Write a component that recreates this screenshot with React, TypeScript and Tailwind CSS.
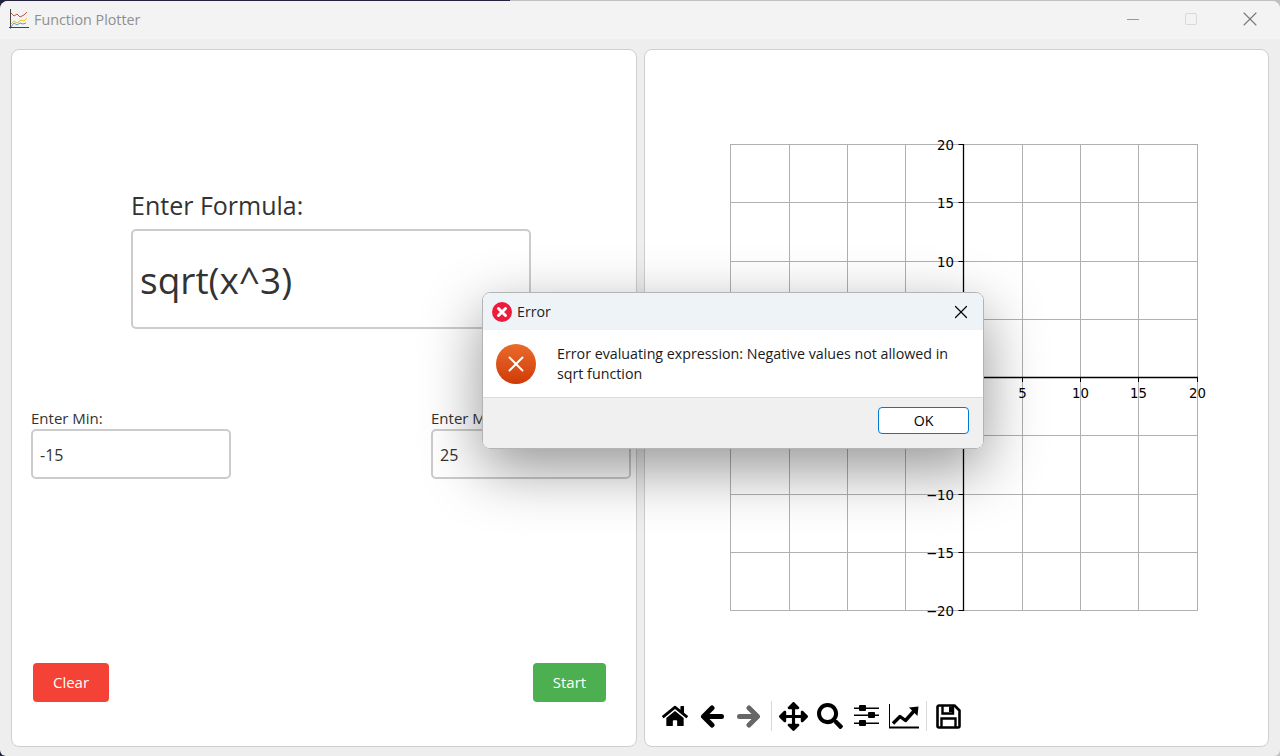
import { FaArrowsAlt, FaHome, FaSearch } from 'react-icons/fa';
import { X } from 'lucide-react';

const FONT = "font-['Open_Sans','Noto_Sans',sans-serif]";

const gridX = [730.5, 789.5, 847.5, 905.5, 963.5, 1022.5, 1080.5, 1138.5, 1197.5];
const gridY = [144.5, 202.5, 261.5, 319.5, 377.5, 435.5, 494.5, 552.5, 610.5];
const ticks = [-20, -15, -10, -5, 0, 5, 10, 15, 20];

function label(n: number) {
    return n < 0 ? `\u2212${-n}` : String(n);
}

function AppIcon() {
    return (
        <svg width="20" height="20" viewBox="0 0 20 20" fill="none" className="shrink-0">
            <path d="M1.5 0v19.5M0 18.5h20" stroke="#444" strokeWidth="1" />
            <path d="M2 4l3 3 3-2 3 3 4-2 3-3" stroke="#c0553f" strokeWidth="1" />
            <path d="M2 15l3-3 3 2 4-3 3 1 3-3" stroke="#e8c23a" strokeWidth="1" />
            <path d="M2 18l3-4 3 2 3-2 3 1 3-1" stroke="#5a9bd8" strokeWidth="1" />
        </svg>
    );
}

function Plot() {
    return (
        <svg width="520" height="500" viewBox="700 130 520 500" className="block">
            {gridX.map((x) => (
                <line key={x} x1={x} x2={x} y1={144} y2={611} stroke="#b0b0b0" strokeWidth="1" />
            ))}
            {gridY.map((y) => (
                <line key={y} x1={730} x2={1198} y1={y} y2={y} stroke="#b0b0b0" strokeWidth="1" />
            ))}
            <line x1={963.5} x2={963.5} y1={144} y2={611} stroke="#000" strokeWidth="1.3" />
            <line x1={730} x2={1198} y1={377.5} y2={377.5} stroke="#000" strokeWidth="1.3" />
            {ticks.map((t, i) => (
                <g key={t} fontFamily="'DejaVu Sans', sans-serif" fontSize="13.3" fill="#000">
                    <line x1={gridX[i]} x2={gridX[i]} y1={377} y2={382} stroke="#000" strokeWidth="1" />
                    <line x1={958.5} x2={963.5} y1={gridY[8 - i]} y2={gridY[8 - i]} stroke="#000" strokeWidth="1" />
                    {/* labels near the origin sit under the dialog */}
                    {t > 0 && <text x={gridX[i]} y={398} textAnchor="middle">{label(t)}</text>}
                    {Math.abs(t) > 5 && <text x={954} y={gridY[8 - i] + 5} textAnchor="end">{label(t)}</text>}
                </g>
            ))}
        </svg>
    );
}

function ArrowIcon({ flip, color }: { flip?: boolean; color: string }) {
    return (
        <svg width="24" height="25" viewBox="0 0 24 25" fill="none" className={flip ? '-scale-x-100' : ''}>
            <path d="M21.5 12.5H6M12 4L3.5 12.5L12 21" stroke={color} strokeWidth="5" strokeLinecap="round" strokeLinejoin="round" />
        </svg>
    );
}

function SlidersIcon() {
    return (
        <svg width="25" height="24" viewBox="0 0 25 24" fill="black">
            <rect x="0" y="3.5" width="25" height="1.5" />
            <rect x="0" y="10.5" width="25" height="1.5" />
            <rect x="0" y="18.5" width="25" height="1.5" />
            <rect x="5" y="1" width="7" height="6" rx="1" />
            <rect x="14" y="8" width="7" height="6" rx="1" />
            <rect x="5" y="16" width="7" height="6" rx="1" />
        </svg>
    );
}

function ChartIcon() {
    return (
        <svg width="30" height="25" viewBox="0 0 30 25" fill="none">
            <path d="M0.5 0V24" stroke="black" strokeWidth="1" />
            <path d="M0 23.5H30" stroke="black" strokeWidth="2" />
            <path d="M4 19.5L11 12.5L16.5 16.5L25 7" stroke="black" strokeWidth="3.4" strokeLinejoin="round" />
            <path d="M20 3.5L29.5 2.5L28.5 12Z" fill="black" />
        </svg>
    );
}

function SaveIcon() {
    return (
        <svg width="25" height="25" viewBox="0 0 25 25" fill="none">
            <path d="M3 1.5H18.5L23.5 6.5V22A1.5 1.5 0 0 1 22 23.5H3A1.5 1.5 0 0 1 1.5 22V3A1.5 1.5 0 0 1 3 1.5Z" stroke="black" strokeWidth="2.6" strokeLinejoin="round" />
            <path d="M6.5 2V9.5H17V2" stroke="black" strokeWidth="2.4" />
            <rect x="13" y="2.5" width="3" height="5.5" fill="black" />
            <path d="M5.5 23V14.5H19.5V23" stroke="black" strokeWidth="2.4" />
        </svg>
    );
}

function ToolButton({ children }: { children: React.ReactNode }) {
    return <div className="w-[37px] h-[32px] flex items-center justify-center text-black">{children}</div>;
}

function Toolbar() {
    return (
        <div className="flex items-center pl-[11px] mt-auto mb-[14px]">
            <ToolButton><FaHome size={26} /></ToolButton>
            <ToolButton><ArrowIcon color="#000" /></ToolButton>
            <ToolButton><ArrowIcon flip color="#666" /></ToolButton>
            <div className="w-px h-[30px] bg-[#d8d8d8] ml-[4px] mr-[3px]" />
            <ToolButton><FaArrowsAlt size={29} /></ToolButton>
            <div className="-ml-px"><ToolButton><FaSearch size={26} /></ToolButton></div>
            <ToolButton><SlidersIcon /></ToolButton>
            <ToolButton><ChartIcon /></ToolButton>
            <div className="w-px h-[30px] bg-[#d8d8d8] ml-[4px] mr-[3px]" />
            <ToolButton><SaveIcon /></ToolButton>
        </div>
    );
}

function ErrorDialog() {
    return (
        <div className={`${FONT} absolute left-[482px] top-[292px] w-[502px] h-[157px] rounded-lg border border-[#b4b4b4] overflow-hidden flex flex-col shadow-[0_20px_60px_rgba(0,0,0,0.42)]`}>
            <div className="h-[37px] shrink-0 bg-[#eef3f7] flex items-center pl-[9px] pr-[12px]">
                <svg width="20" height="20" viewBox="0 0 20 20" className="shrink-0">
                    <circle cx="10" cy="10" r="10" fill="#ee1c3c" />
                    <path d="M6.5 6.5l7 7M13.5 6.5l-7 7" stroke="#fff" strokeWidth="3" strokeLinecap="round" />
                </svg>
                <span className="ml-[5px] text-[14.2px] text-[#222]">Error</span>
                <X size={22} strokeWidth={1.3} className="ml-auto mr-[-1px] text-black" />
            </div>
            <div className="h-[68px] shrink-0 bg-white flex border-b border-[#dcdcdc] pl-[13px]">
                <div className="w-[40px] h-[40px] mt-[14px] rounded-full bg-gradient-to-b from-[#ea6a2a] to-[#cf3a05] flex items-center justify-center shrink-0">
                    <X size={26} strokeWidth={1.8} className="text-white" />
                </div>
                <p className="ml-[21px] mt-[14px] w-[410px] text-[14.25px] leading-[20px] text-[#1a1a1a]">
                    Error evaluating expression: Negative values not allowed in sqrt function
                </p>
            </div>
            <div className="flex-1 bg-[#f0f0f0] flex items-start justify-end pt-[9px] pr-[14px]">
                <button className="w-[91px] h-[27px] rounded-[4px] border border-[#0078d4] bg-white text-[14.2px] text-black">OK</button>
            </div>
        </div>
    );
}

export default function App() {
    return (
        <div className="relative w-[1280px] h-[756px] overflow-hidden bg-[linear-gradient(90deg,#23233f_0,#23233f_510px,#c0c0c0_510px)]">
            <div className={`${FONT} mt-px h-[755px] rounded-t-lg rounded-b-md overflow-hidden bg-[#eeeeee] flex flex-col`}>
                <div className="h-[38px] mb-[10px] shrink-0 bg-[#f3f3f3] flex items-start pl-[9px] pt-[8px]">
                    <AppIcon />
                    <span className="ml-[5px] mt-px text-[14.3px] leading-[20px] text-[#8f8f8f]">Function Plotter</span>
                    <div className="ml-auto flex items-center h-[20px] text-[#777]">
                        <div className="w-[12px] h-px bg-[#999] mr-[46px]" />
                        <div className="w-[12px] h-[12px] rounded-[2px] border border-[#d8d8d8] mr-[41px]" />
                        <X size={24} strokeWidth={1.1} className="mr-[18px]" />
                    </div>
                </div>
                <div className="flex gap-[7px] px-[11px]">
                    <div className="relative w-[626px] h-[698px] bg-white rounded-lg border border-[#cfcfcf] flex flex-col">
                        <div className="ml-[119px] mt-[137px] w-[400px]">
                            <div className="text-[25px] leading-[36px] text-[#333]">Enter Formula:</div>
                            <div className="h-[100px] mt-[6px] rounded-[5px] border-2 border-[#ccc] flex items-center px-[7px] pt-px text-[37px] text-[#333]">sqrt(x^3)</div>
                        </div>
                        <div className="flex justify-between px-[19px] mt-[80px] pr-[5px]">
                            <div className="w-[200px]">
                                <div className="-mt-px mb-px text-[15px] leading-[20px] text-[#333]">Enter Min:</div>
                                <div className="h-[50px] rounded-[5px] border-2 border-[#ccc] flex items-center px-[7px] pt-px text-[16px] text-[#333]">-15</div>
                            </div>
                            <div className="w-[200px]">
                                <div className="-mt-px mb-px text-[15px] leading-[20px] text-[#333]">Enter Max:</div>
                                <div className="h-[50px] rounded-[5px] border-2 border-[#ccc] flex items-center px-[7px] pt-px text-[16px] text-[#333]">25</div>
                            </div>
                        </div>
                        <div className="flex justify-between mt-auto mb-[44px] pl-[21px] pr-[30px]">
                            <button className="w-[76px] h-[39px] rounded bg-[#f44336] text-white text-[15px]">Clear</button>
                            <button className="w-[73px] h-[39px] rounded bg-[#4caf50] text-white text-[15px]">Start</button>
                        </div>
                    </div>
                    <div className="w-[625px] h-[698px] bg-white rounded-lg border border-[#cfcfcf] flex flex-col">
                        <div className="ml-[55px] mt-[80px]">
                            <Plot />
                        </div>
                        <Toolbar />
                    </div>
                </div>
            </div>
            <ErrorDialog />
        </div>
    );
}
